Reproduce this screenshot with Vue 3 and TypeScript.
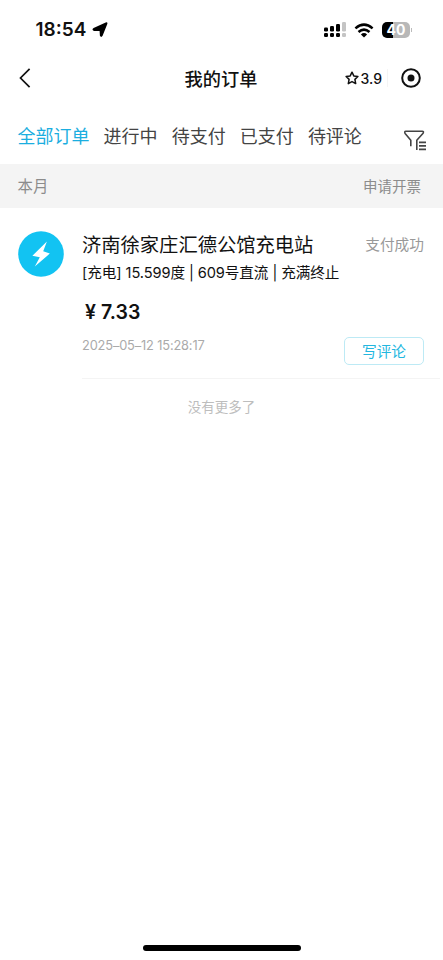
<script setup lang="ts">
import { ref } from 'vue'

interface Order {
  id: number
  station: string
  detail: string
  amount: string
  time: string
  status: string
}

const tabs: string[] = ['全部订单', '进行中', '待支付', '已支付', '待评论']
const activeTab = ref<number>(0)

const orders: Order[] = [
  {
    id: 1,
    station: '济南徐家庄汇德公馆充电站',
    detail: '[充电] 15.599度 | 609号直流 | 充满终止',
    amount: '7.33',
    time: '2025–05–12 15:28:17',
    status: '支付成功',
  },
]
</script>

<template>
  <div class="screen">
    <div class="status-bar">
      <span class="clock">18:54</span>
      <svg class="location" width="16" height="16" viewBox="0 0 16 16">
        <path d="M13.7 .5Q15.9 -.1 15.3 2L10.6 13.8Q9.2 16 7.9 13.8L7.6 9.1 2 8.9Q-.8 7.7 1.6 6Z" />
      </svg>
      <svg class="signal" width="23" height="16" viewBox="0 0 23 16">
        <g fill="#000">
          <rect x="0" y="5.5" width="4" height="4" rx="1.2" />
          <rect x="6" y="4" width="4" height="5.5" rx="1.2" />
          <rect x="12" y="2" width="4" height="7.5" rx="1.2" />
          <rect x="0" y="11" width="4" height="4" rx="1.2" />
          <rect x="6" y="11" width="4" height="4" rx="1.2" />
          <rect x="12" y="11" width="4" height="4" rx="1.2" />
        </g>
        <g fill="#c4c4c4">
          <rect x="18" y="0" width="4" height="9.5" rx="1.2" />
          <rect x="18" y="11" width="4" height="4" rx="1.2" />
        </g>
      </svg>
      <svg class="wifi" width="20" height="15" viewBox="0 0 20 15">
        <g fill="none" stroke="#000" stroke-width="2.5">
          <path d="M1.4 5.4Q10 -2.2 18.6 5.4" />
          <path d="M4.5 9Q10 4.2 15.5 9" />
        </g>
        <path d="M6.9 11.4Q10 8.8 13.1 11.4L10 14.6Z" />
      </svg>
      <div class="battery"><span>40</span></div>
      <i class="battery-cap"></i>
    </div>

    <header class="nav">
      <div class="nav-side">
        <svg width="12" height="20" viewBox="0 0 12 20">
          <path d="M10.6 .9 1.5 10 10.6 19.1" fill="none" stroke="#111" stroke-width="1.7" />
        </svg>
      </div>
      <h1>我的订单</h1>
      <div class="nav-side capsule">
        <svg width="14" height="14" viewBox="0 0 14 14">
          <path d="M7 1.2 8.8 4.9 12.9 5.5 9.9 8.4 10.7 12.6 7 10.6 3.3 12.6 4.1 8.4 1.1 5.5 5.2 4.9Z" fill="none" stroke="#111" stroke-width="1.5" stroke-linejoin="round" />
        </svg>
        <span class="score">3.9</span>
        <i class="divider"></i>
        <svg width="20" height="20" viewBox="0 0 20 20">
          <circle cx="10" cy="10" r="8.8" fill="none" stroke="#111" stroke-width="2" />
          <circle cx="10" cy="10" r="3.5" fill="#111" />
        </svg>
      </div>
    </header>

    <nav class="tabs">
      <span
        v-for="(tab, index) in tabs"
        :key="tab"
        class="tab"
        :class="{ active: index === activeTab }"
        @click="activeTab = index"
      >{{ tab }}</span>
      <svg class="filter" width="23" height="21" viewBox="0 0 23 21">
        <g fill="none" stroke="#444" stroke-width="1.6" stroke-linejoin="round">
          <path d="M6.8 16.2V10.3L1.1 3.4Q.2 1.2 1.8 1.2H18.2Q20 1.2 19.1 3.2L12.8 10.3V20" />
          <path d="M15 12.4H22M15 15.9H22M15 19.4H22" />
        </g>
      </svg>
    </nav>

    <div class="month">
      <span class="month-name">本月</span>
      <span class="invoice">申请开票</span>
    </div>

    <main>
      <article v-for="order in orders" :key="order.id" class="order">
        <svg class="bolt" width="46" height="46" viewBox="0 0 46 46">
          <circle cx="23" cy="23" r="22.8" fill="#12c3f2" />
          <path d="M28.9 10.5 14.4 24.7 21.8 26.2 16.8 35.5 31.8 22.6 25.2 20.2Z" fill="#fff" />
        </svg>
        <div class="body">
          <div class="heading">
            <h2>{{ order.station }}</h2>
            <span class="state">{{ order.status }}</span>
          </div>
          <p class="detail">{{ order.detail }}</p>
          <p class="amount"><span class="yen">¥</span>{{ order.amount }}</p>
          <div class="footer">
            <time>{{ order.time }}</time>
            <button type="button">写评论</button>
          </div>
        </div>
      </article>
      <p class="end">没有更多了</p>
    </main>

    <div class="home-indicator"></div>
  </div>
</template>

<style>
body {
  margin: 0;
  background: #fff;
}
</style>

<style scoped>
.screen {
  display: flex;
  flex-direction: column;
  width: 443px;
  height: 960px;
  overflow: hidden;
  background: #fff;
  color: #111;
  font-family: Inter, "Noto Sans CJK SC", sans-serif;
}

h1, h2, p {
  margin: 0;
}

svg {
  display: block;
  flex: none;
}

span, h1, h2, p, time {
  white-space: nowrap;
}

.status-bar {
  display: flex;
  align-items: center;
  height: 60px;
  box-sizing: border-box;
  padding: 0 31px 0 35.5px;
}

.clock {
  width: 51.5px;
  font-size: 19px;
  font-weight: 600;
  line-height: 24px;
}

.location {
  margin-left: 5px;
}

.signal {
  margin: 0 7px 0 auto;
}

.wifi {
  margin-right: 8px;
}

.battery {
  display: flex;
  align-items: center;
  justify-content: center;
  width: 28px;
  height: 16px;
  border-radius: 5px;
  background: linear-gradient(90deg, #000 0 40%, #b8b8b8 40%);
  color: #fff;
  font-size: 14px;
  font-weight: 700;
  line-height: 16px;
}

.battery-cap {
  width: 1px;
  height: 4px;
  margin-left: 1px;
  background: #bbb;
}

.nav {
  display: flex;
  align-items: center;
  height: 36px;
  padding: 0 22px 0 19px;
}

.nav-side {
  display: flex;
  align-items: center;
  width: 100px;
}

h1 {
  flex: 1;
  padding-top: 1px;
  font-size: 18.2px;
  font-weight: 500;
  line-height: 24px;
  text-align: center;
}

.capsule {
  width: 98px;
  justify-content: flex-end;
}

.score {
  margin-left: 2px;
  font-size: 14px;
  font-weight: 500;
}

.divider {
  width: 1px;
  height: 18px;
  margin: 0 13px 0 5px;
  background: #f4f4f4;
}

.tabs {
  display: flex;
  align-items: center;
  gap: 14.1px;
  height: 68px;
  box-sizing: border-box;
  padding: 14px 16.5px 0 17.5px;
}

.tab {
  color: #444;
  font-size: 18px;
  line-height: 26px;
}

.tab.active {
  color: #1baee0;
}

.filter {
  margin: 6px 0 0 auto;
}

.month {
  display: flex;
  align-items: center;
  justify-content: space-between;
  height: 44px;
  box-sizing: border-box;
  padding: 0 22px 2px 17.5px;
  background: #f4f4f4;
  color: #8c8c8c;
}

.month-name {
  font-size: 15.4px;
}

.invoice {
  font-size: 14.5px;
}

main {
  flex: 1;
}

.order {
  display: flex;
  gap: 18px;
  padding: 23px 3px 0 18px;
}

.body {
  flex: 1;
  height: 147px;
  border-bottom: 1px solid #f4f4f4;
}

.heading {
  display: flex;
  align-items: center;
  justify-content: space-between;
  height: 28px;
  padding-right: 16px;
}

h2 {
  font-size: 19.3px;
  font-weight: 400;
  line-height: 28px;
}

.state {
  margin-top: -3px;
  color: #999;
  font-size: 14.7px;
}

.detail {
  height: 28px;
  font-size: 14.6px;
  letter-spacing: -0.08px;
  line-height: 28px;
}

.amount {
  display: flex;
  margin-top: 11px;
  padding-left: 3px;
  font-size: 19.5px;
  font-weight: 600;
  line-height: 28px;
}

.yen {
  width: 16px;
}

.footer {
  display: flex;
  justify-content: space-between;
  margin-top: 11px;
  padding-right: 16px;
}

time {
  color: #aaa;
  font-size: 12.8px;
  letter-spacing: -0.14px;
  line-height: 17px;
}

button {
  width: 80px;
  height: 28px;
  box-sizing: border-box;
  padding: 2px 0 0;
  border: 1px solid #bdeaf5;
  border-radius: 5px;
  background: #fff;
  color: #23b7df;
  font-family: inherit;
  font-size: 14.7px;
  line-height: 24px;
}

.end {
  margin-top: 18px;
  color: #bdbdbd;
  font-size: 13.5px;
  line-height: 20px;
  text-align: center;
}

.home-indicator {
  width: 158px;
  height: 6px;
  margin: 0 auto 9px;
  border-radius: 3px;
  background: #000;
}
</style>
